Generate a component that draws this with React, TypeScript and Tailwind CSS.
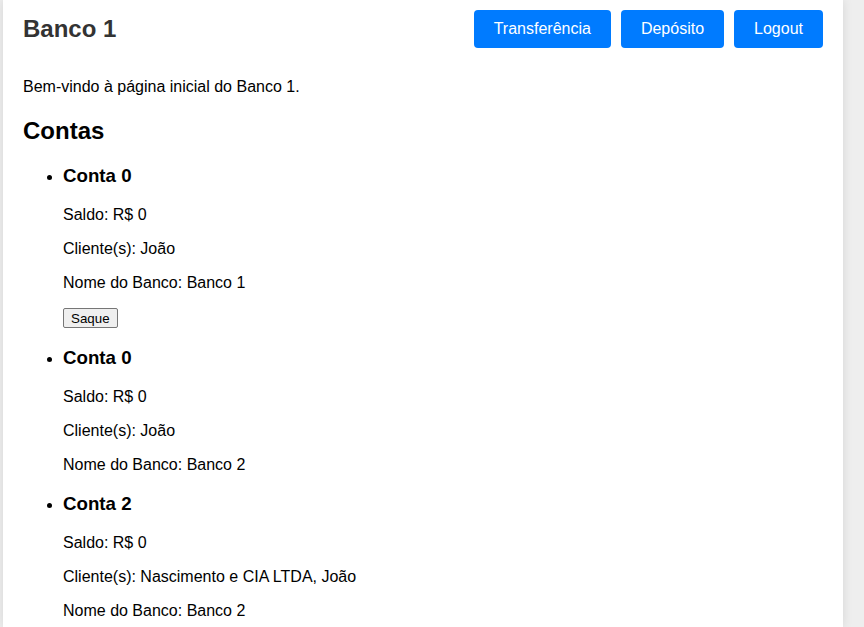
import React from "react";

const contas = [
  { nome: "Conta 0", saldo: "R$ 0", clientes: "João", banco: "Banco 1", saque: true },
  { nome: "Conta 0", saldo: "R$ 0", clientes: "João", banco: "Banco 2", saque: false },
  { nome: "Conta 2", saldo: "R$ 0", clientes: "Nascimento e CIA LTDA, João", banco: "Banco 2", saque: false },
];

const liMargin = ["", "mt-[17px]", "mt-[19px]"];

export default function App() {
  return (
    <div className="min-h-[627px] bg-[#eeeeee] pl-[3px] font-['Liberation_Sans',Arial,sans-serif] text-black">
      <div className="w-[840px] min-h-[627px] bg-white px-[20px] shadow-[0_0_10px_rgba(0,0,0,0.1)]">
        <header className="flex h-[58px] items-center justify-between">
          <h1 className="text-[24px] font-bold leading-[28px] text-[#333]">Banco 1</h1>
          <nav className="flex gap-[10px]">
            <button className="h-[38px] rounded-[4px] bg-[#007bff] px-[20px] text-[16px] text-white">Transferência</button>
            <button className="h-[38px] rounded-[4px] bg-[#007bff] px-[20px] text-[16px] text-white">Depósito</button>
            <button className="h-[38px] rounded-[4px] bg-[#007bff] px-[20px] text-[16px] text-white">Logout</button>
          </nav>
        </header>
        <p className="mt-[20px] text-[16px] leading-[18px]">Bem-vindo à página inicial do Banco 1.</p>
        <h2 className="mt-[21px] text-[24px] font-bold leading-[28px]">Contas</h2>
        <ul className="mt-[20px] list-disc pl-[40px]">
          {contas.map((c, i) => (
            <li key={i} className={liMargin[i]}>
              <h3 className="text-[18.72px] font-bold leading-[22px]">{c.nome}</h3>
              <p className="mt-[19px] text-[16px] leading-[18px]">Saldo: {c.saldo}</p>
              <p className="mt-[16px] text-[16px] leading-[18px]">Cliente(s): {c.clientes}</p>
              <p className="mt-[16px] text-[16px] leading-[18px]">Nome do Banco: {c.banco}</p>
              {c.saque && (
                <button className="mt-[16px] h-[20px] rounded-[2px] border border-[#767676] bg-[#efefef] px-[7px] text-[13.33px] leading-[15px] text-black">
                  Saque
                </button>
              )}
            </li>
          ))}
        </ul>
      </div>
    </div>
  );
}
